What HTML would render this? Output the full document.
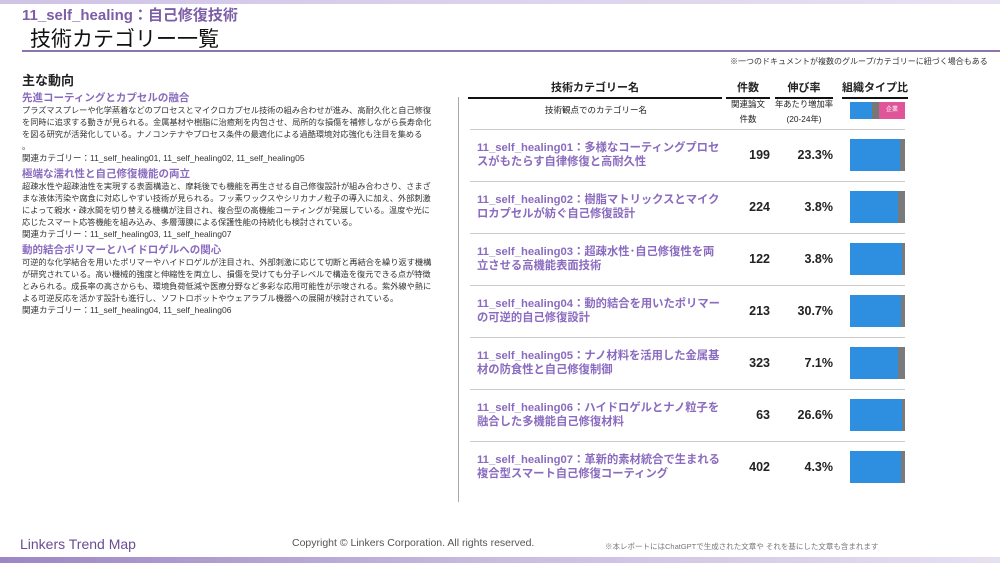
<!DOCTYPE html>
<html><head><meta charset="utf-8"><style>
*{margin:0;padding:0;box-sizing:border-box}
body{width:1000px;height:563px;position:relative;background:#fff;font-family:"Liberation Sans","Noto Sans CJK JP",sans-serif;color:#222;overflow:hidden}
.a{position:absolute}
.p{color:#7b5ea7}
.lt{font-size:8.2px;line-height:12px;color:#333}
.sh{font-size:10.5px;font-weight:bold;color:#8a6bbf}
.row{position:absolute;left:470px;width:435px;height:52px;border-bottom:1px solid #ccc}
.rn{position:absolute;left:7px;top:11px;width:248px;font-size:11.3px;line-height:14px;font-weight:bold;color:#8a6bbf}
.rc{position:absolute;left:255px;width:45px;text-align:right;top:18px;font-size:12.5px;font-weight:bold}
.rg{position:absolute;left:305px;width:58px;text-align:right;top:18px;font-size:12.5px;font-weight:bold}
.bar{position:absolute;left:380px;top:9px;width:55px;height:32px;background:#2e8fe0}
.bar i{position:absolute;right:0;top:0;height:32px;background:#7a7a7a}
</style></head><body>
<div class="a" style="left:0;top:0;width:1000px;height:4px;background:linear-gradient(90deg,#cfc3e6,#e8e1f3)"></div>
<div class="a p" style="left:22px;top:4px;font-size:15px;font-weight:bold;color:#7b5ea7">11_self_healing：自己修復技術</div>
<div class="a" style="left:30px;top:23px;font-size:21px;color:#111">技術カテゴリー一覧</div>
<div class="a" style="left:22px;top:50px;width:978px;height:2px;background:#8c74b0"></div>
<div class="a" style="left:730px;top:56px;font-size:8px;color:#333">※一つのドキュメントが複数のグループ/カテゴリーに紐づく場合もある</div>

<div class="a" style="left:22px;top:70px;font-size:13px;font-weight:bold">主な動向</div>
<div class="a sh" style="left:22px;top:90px">先進コーティングとカプセルの融合</div>
<div class="a lt" style="left:22px;top:105px;width:415px">プラズマスプレーや化学蒸着などのプロセスとマイクロカプセル技術の組み合わせが進み、高耐久化と自己修復を同時に追求する動きが見られる。金属基材や樹脂に治癒剤を内包させ、局所的な損傷を補修しながら長寿命化を図る研究が活発化している。ナノコンテナやプロセス条件の最適化による過酷環境対応強化も注目を集める<br>。</div>
<div class="a lt" style="left:22px;top:152px;font-size:8.5px">関連カテゴリー：11_self_healing01, 11_self_healing02, 11_self_healing05</div>
<div class="a sh" style="left:22px;top:166px">極端な濡れ性と自己修復機能の両立</div>
<div class="a lt" style="left:22px;top:181px;width:415px">超疎水性や超疎油性を実現する表面構造と、摩耗後でも機能を再生させる自己修復設計が組み合わさり、さまざまな液体汚染や腐食に対応しやすい技術が見られる。フッ素ワックスやシリカナノ粒子の導入に加え、外部刺激によって親水・疎水間を切り替える機構が注目され、複合型の高機能コーティングが発展している。温度や光に応じたスマート応答機能を組み込み、多層薄膜による保護性能の持続化も検討されている。</div>
<div class="a lt" style="left:22px;top:228px;font-size:8.5px">関連カテゴリー：11_self_healing03, 11_self_healing07</div>
<div class="a sh" style="left:22px;top:242px">動的結合ポリマーとハイドロゲルへの関心</div>
<div class="a lt" style="left:22px;top:257px;width:415px">可逆的な化学結合を用いたポリマーやハイドロゲルが注目され、外部刺激に応じて切断と再結合を繰り返す機構が研究されている。高い機械的強度と伸縮性を両立し、損傷を受けても分子レベルで構造を復元できる点が特徴とみられる。成長率の高さからも、環境負荷低減や医療分野など多彩な応用可能性が示唆される。紫外線や熱による可逆反応を活かす設計も進行し、ソフトロボットやウェアラブル機器への展開が検討されている。</div>
<div class="a lt" style="left:22px;top:304px;font-size:8.5px">関連カテゴリー：11_self_healing04, 11_self_healing06</div>

<div class="a" style="left:458px;top:97px;width:1px;height:405px;background:#aaa"></div>
<div class="a" style="left:468px;top:79px;width:254px;text-align:center;font-size:11px;font-weight:bold;border-bottom:2px solid #111;padding-bottom:2px">技術カテゴリー名</div>
<div class="a" style="left:726px;top:79px;width:44px;text-align:center;font-size:11px;font-weight:bold;border-bottom:2px solid #111;padding-bottom:2px">件数</div>
<div class="a" style="left:775px;top:79px;width:58px;text-align:center;font-size:11px;font-weight:bold;border-bottom:2px solid #111;padding-bottom:2px">伸び率</div>
<div class="a" style="left:842px;top:79px;width:66px;text-align:center;font-size:11px;font-weight:bold;border-bottom:2px solid #111;padding-bottom:2px">組織タイプ比</div>
<div class="a" style="left:470px;top:104px;width:252px;text-align:center;font-size:8.5px">技術観点でのカテゴリー名</div>
<div class="a" style="left:726px;top:97px;width:44px;text-align:center;font-size:8.5px;line-height:15px;white-space:nowrap">関連論文<br>件数</div>
<div class="a" style="left:770px;top:97px;width:68px;text-align:center;font-size:8.3px;line-height:15px;white-space:nowrap">年あたり増加率<br>(20-24年)</div>
<div class="a" style="left:850px;top:102px;width:55px;height:17px;background:#2e8fe0"></div>
<div class="a" style="left:872px;top:102px;width:7px;height:17px;background:#777"></div>
<div class="a" style="left:879px;top:102px;width:26px;height:17px;background:#e0559a;color:#fff;font-size:6px;text-align:center;line-height:17px">企業</div>
<div class="a" style="left:470px;top:129px;width:435px;height:1px;background:#ccc"></div>

<div class="row" style="top:130px"><div class="rn">11_self_healing01：多様なコーティングプロセスがもたらす自律修復と高耐久性</div><div class="rc">199</div><div class="rg">23.3%</div><div class="bar"><i style="width:5px"></i></div></div>
<div class="row" style="top:182px"><div class="rn">11_self_healing02：樹脂マトリックスとマイクロカプセルが紡ぐ自己修復設計</div><div class="rc">224</div><div class="rg">3.8%</div><div class="bar"><i style="width:7px"></i></div></div>
<div class="row" style="top:234px"><div class="rn">11_self_healing03：超疎水性･自己修復性を両立させる高機能表面技術</div><div class="rc">122</div><div class="rg">3.8%</div><div class="bar"><i style="width:3px"></i></div></div>
<div class="row" style="top:286px"><div class="rn">11_self_healing04：動的結合を用いたポリマーの可逆的自己修復設計</div><div class="rc">213</div><div class="rg">30.7%</div><div class="bar"><i style="width:4px"></i></div></div>
<div class="row" style="top:338px"><div class="rn">11_self_healing05：ナノ材料を活用した金属基材の防食性と自己修復制御</div><div class="rc">323</div><div class="rg">7.1%</div><div class="bar"><i style="width:7px"></i></div></div>
<div class="row" style="top:390px"><div class="rn">11_self_healing06：ハイドロゲルとナノ粒子を融合した多機能自己修復材料</div><div class="rc">63</div><div class="rg">26.6%</div><div class="bar"><i style="width:3px"></i></div></div>
<div class="row" style="top:442px;border-bottom:none"><div class="rn">11_self_healing07：革新的素材統合で生まれる複合型スマート自己修復コーティング</div><div class="rc">402</div><div class="rg">4.3%</div><div class="bar"><i style="width:4px"></i></div></div>

<div class="a" style="left:20px;top:536px;font-size:14px;color:#6a4d95">Linkers Trend Map</div>
<div class="a" style="left:292px;top:537px;font-size:10.5px;color:#555">Copyright © Linkers Corporation. All rights reserved.</div>
<div class="a" style="left:605px;top:541px;font-size:7.5px;color:#777">※本レポートにはChatGPTで生成された文章や それを基にした文章も含まれます</div>
<div class="a" style="left:0;top:557px;width:1000px;height:6px;background:linear-gradient(90deg,#9d86c4,#c9bce0,#e6e0f1)"></div>
</body></html>
